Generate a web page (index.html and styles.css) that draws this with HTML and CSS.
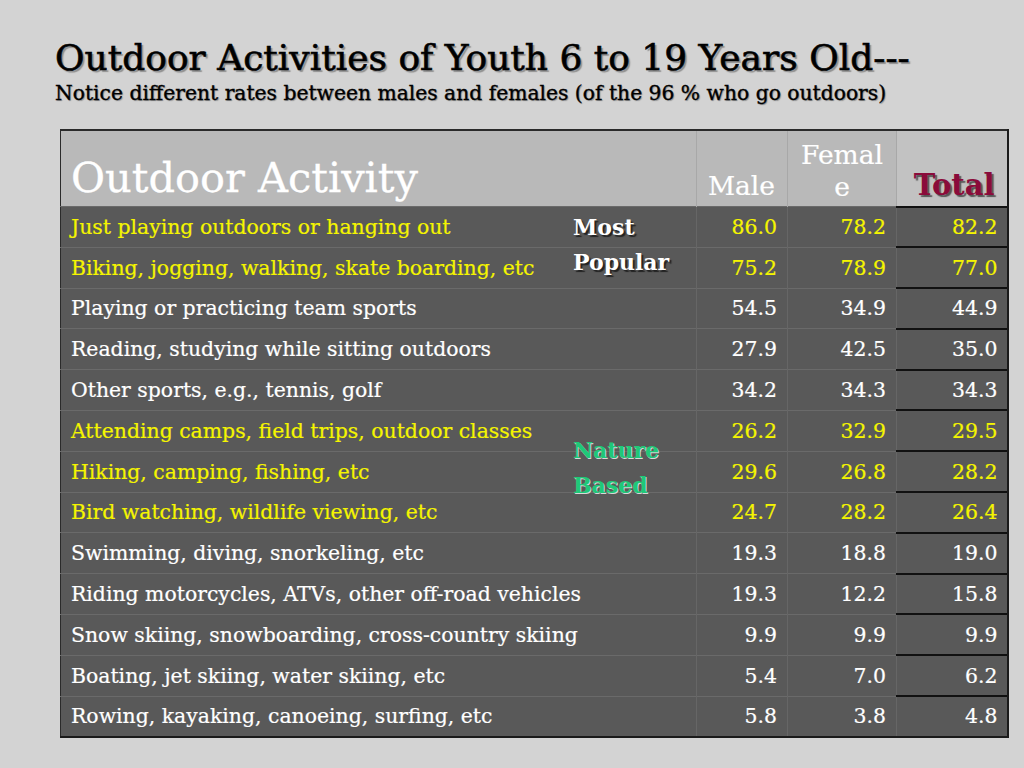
FILE: index.html
```html
<!DOCTYPE html>
<html>
<head>
<meta charset="utf-8">
<link rel="stylesheet" href="styles.css">
</head>
<body>
<div class="slide">
  <header class="heading">
    <h1 class="title">Outdoor Activities of Youth 6 to 19 Years Old---</h1>
    <p class="subtitle">Notice different rates between males and females (of the 96 % who go outdoors)</p>
  </header>
  <div class="table-wrap">
    <table class="data">
      <colgroup>
        <col class="c-act"><col class="c-male"><col class="c-fem"><col class="c-tot">
      </colgroup>
      <thead>
        <tr>
          <th class="h-act">Outdoor Activity</th>
          <th class="h-num">Male</th>
          <th class="h-num h-fem"><span class="ln">Femal</span><span class="ln">e</span></th>
          <th class="h-tot">Total</th>
        </tr>
      </thead>
      <tbody>
        <tr class="hl"><td>Just playing outdoors or hanging out</td><td>86.0</td><td>78.2</td><td class="tot">82.2</td></tr>
        <tr class="hl"><td>Biking, jogging, walking, skate boarding, etc</td><td>75.2</td><td>78.9</td><td class="tot">77.0</td></tr>
        <tr><td>Playing or practicing team sports</td><td>54.5</td><td>34.9</td><td class="tot">44.9</td></tr>
        <tr><td>Reading, studying while sitting outdoors</td><td>27.9</td><td>42.5</td><td class="tot">35.0</td></tr>
        <tr><td>Other sports, e.g., tennis, golf</td><td>34.2</td><td>34.3</td><td class="tot">34.3</td></tr>
        <tr class="hl"><td>Attending camps, field trips, outdoor classes</td><td>26.2</td><td>32.9</td><td class="tot">29.5</td></tr>
        <tr class="hl"><td>Hiking, camping, fishing, etc</td><td>29.6</td><td>26.8</td><td class="tot">28.2</td></tr>
        <tr class="hl"><td>Bird watching, wildlife viewing, etc</td><td>24.7</td><td>28.2</td><td class="tot">26.4</td></tr>
        <tr><td>Swimming, diving, snorkeling, etc</td><td>19.3</td><td>18.8</td><td class="tot">19.0</td></tr>
        <tr><td>Riding motorcycles, ATVs, other off-road vehicles</td><td>19.3</td><td>12.2</td><td class="tot">15.8</td></tr>
        <tr><td>Snow skiing, snowboarding, cross-country skiing</td><td>9.9</td><td>9.9</td><td class="tot">9.9</td></tr>
        <tr><td>Boating, jet skiing, water skiing, etc</td><td>5.4</td><td>7.0</td><td class="tot">6.2</td></tr>
        <tr><td>Rowing, kayaking, canoeing, surfing, etc</td><td>5.8</td><td>3.8</td><td class="tot">4.8</td></tr>
      </tbody>
    </table>
    <div class="tag tag-popular">Most<br>Popular</div>
    <div class="tag tag-nature">Nature<br>Based</div>
  </div>
</div>
</body>
</html>
```
FILE: styles.css
```css
html, body {
  margin: 0;
  padding: 0;
}
body {
  background: #d3d3d3;
  font-family: "DejaVu Serif", "Liberation Serif", serif;
  width: 1024px;
  height: 768px;
  overflow: hidden;
}
.slide {
  padding: 36px 0 0 55px;
}
.heading {
  margin: 0;
}
.title {
  margin: 0;
  font-size: 36px;
  font-weight: normal;
  line-height: 44px;
  color: #000;
  -webkit-text-stroke: 0.6px #000;
  text-shadow: 2px 2px 1px #8f8f8f;
}
.subtitle {
  margin: -1px 0 0 0;
  font-size: 20.3px;
  line-height: 28px;
  color: #000;
  -webkit-text-stroke: 0.35px #000;
  text-shadow: 1px 1px 1px #8f8f8f;
}
.table-wrap {
  position: relative;
  margin: 22px 0 0 5px;
  width: 948px;
}
.data {
  border-collapse: collapse;
  table-layout: fixed;
  width: 947px;
  border-left: 1px solid #2a2a2a;
  border-top: 2px solid #2a2a2a;
  border-bottom: 2px solid #1a1a1a;
}
.c-act { width: 636px; }
.c-male { width: 91px; }
.c-fem { width: 109px; }
.c-tot { width: 111px; }
thead th {
  background: #b9b9b9;
  color: #fff;
  font-weight: normal;
  height: 70px;
  vertical-align: bottom;
  padding: 0 0 6px 0;
  border-right: 1px solid #a8a8a8;
}
.h-act {
  text-align: left;
  font-size: 41.5px;
  padding-left: 10px !important;
  padding-bottom: 5px !important;
  line-height: 46px;
  -webkit-text-stroke: 0.3px #fff;
}
.h-num {
  font-size: 26.5px;
  line-height: 36px;
  text-align: right;
  padding-right: 12px !important;
  padding-bottom: 2px !important;
  -webkit-text-stroke: 0.2px #fff;
}
.h-fem {
  text-align: center;
  padding-right: 0 !important;
  line-height: 32px;
  padding-bottom: 3px !important;
}
.h-fem .ln {
  display: block;
}
.h-tot {
  background: #c2c2c2 !important;
  color: #8a0b3a !important;
  font-weight: bold !important;
  font-size: 29px;
  line-height: 36px;
  text-align: right;
  padding-right: 12px !important;
  padding-bottom: 3px !important;
  text-shadow: 2px 2px 1px #555;
  -webkit-text-stroke: 0;
  border-right: 2px solid #1a1a1a !important;
}
tbody td {
  background: #595959;
  color: #fff;
  font-size: 20.4px;
  height: 38.8px;
  padding: 0 10px;
  vertical-align: middle;
  text-align: right;
  border-top: 1px solid #6a6a6a;
  border-right: 1px solid #666;
  white-space: nowrap;
  -webkit-text-stroke: 0.2px currentColor;
}
tbody td:first-child {
  text-align: left;
  padding-left: 10px;
}
tbody td.tot {
  border-top: 2px solid #111;
  border-right: 2px solid #1a1a1a;
  padding-right: 9px;
}
tbody tr.hl td {
  color: #f5f500;
}
.tag {
  position: absolute;
  font-weight: bold;
  font-size: 22px;
  line-height: 35px;
}
.tag-popular {
  left: 513px;
  top: 81px;
  color: #fff;
  text-shadow: 2px 2px 1px #222;
}
.tag-nature {
  left: 513px;
  top: 304px;
  color: #1fc878;
  text-shadow: 1px 1px 0 #d8d8d8;
}
```
